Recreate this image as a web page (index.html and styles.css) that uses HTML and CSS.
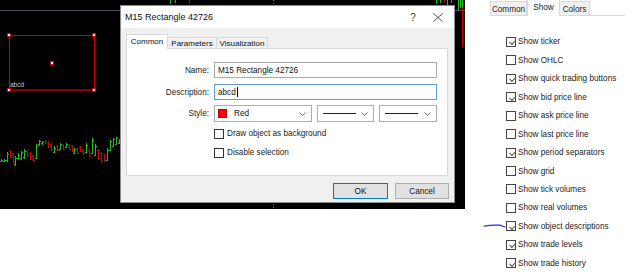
FILE: index.html
```html
<!DOCTYPE html>
<html>
<head>
<meta charset="utf-8">
<link rel="stylesheet" href="styles.css">
</head>
<body>
<div class="screen">
  <div class="chart">
    <svg class="chart-svg" width="465" height="209" viewBox="0 0 465 209">
      <line x1="0" y1="10.5" x2="465" y2="10.5" stroke="#4c525e" stroke-width="1"/>
      <line x1="273.5" y1="0" x2="273.5" y2="209" stroke="#5c6370" stroke-width="1" stroke-dasharray="1 2"/>
      <path fill="none" stroke="#1fbf1f" stroke-width="1" d="M1.5 159V162M0 161.5H1.5M1.5 160.5H3M4.5 159V162M3 161.5H4.5M4.5 160.5H6M7.5 152V162M6 160.5H7.5M7.5 154.5H9M15.5 156V166M14 164.5H15.5M15.5 158.5H17M18.5 153V160M17 158.5H18.5M18.5 155.5H20M21.5 151V160M20 158.5H21.5M21.5 152.5H23M24.5 149V159M23 157.5H24.5M24.5 151.5H26M36.5 144V159M35 158.5H36.5M36.5 146.5H38M39.5 140V146M38 144.5H39.5M39.5 141.5H41M42.5 141V145M41 143.5H42.5M42.5 142.5H44M54.5 146V153M53 152.5H54.5M54.5 148.5H56M60.5 143V150M59 149.5H60.5M60.5 144.5H62M66.5 143V148M65 147.5H66.5M66.5 144.5H68M74.5 148V154M73 153.5H74.5M74.5 149.5H76M86.5 143V153M85 152.5H86.5M86.5 145.5H88M92.5 138V154M91 153.5H92.5M92.5 140.5H94M95.5 144V156M94 155.5H95.5M95.5 146.5H97M107.5 148V161M106 160.5H107.5M107.5 150.5H109M110.5 140V151M109 150.5H110.5M110.5 141.5H112M113.5 138V147M112 146.5H113.5M113.5 139.5H115M116.5 137V145M115 144.5H116.5M116.5 138.5H118M119.5 139V144M118 143.5H119.5M170.5 0V4M175.5 0V3M436.5 0V4M440.5 0V3M447.5 0V5M451.5 0V3M458.5 0V10M460.5 0V8M462.5 0V8"/>
      <path fill="none" stroke="#d00000" stroke-width="1" d="M10.5 150V158M9 151.5H10.5M10.5 157.5H12M13.5 153V163M12 155.5H13.5M13.5 162.5H15M27.5 150V157M26 151.5H27.5M27.5 155.5H29M30.5 152V160M29 153.5H30.5M30.5 158.5H32M33.5 155V162M32 156.5H33.5M33.5 160.5H35M45.5 140V144M44 141.5H45.5M45.5 143.5H47M48.5 141V148M47 142.5H48.5M48.5 147.5H50M51.5 143V151M50 144.5H51.5M51.5 149.5H53M57.5 145V151M56 146.5H57.5M57.5 150.5H59M63.5 144V150M62 145.5H63.5M63.5 149.5H65M69.5 144V150M68 145.5H69.5M69.5 149.5H71M72.5 145V152M71 146.5H72.5M72.5 151.5H74M77.5 148V154M76 149.5H77.5M77.5 153.5H79M80.5 146V152M79 147.5H80.5M80.5 151.5H82M83.5 149V155M82 150.5H83.5M83.5 153.5H85M89.5 149V157M88 150.5H89.5M89.5 156.5H91M98.5 149V160M97 150.5H98.5M98.5 158.5H100M101.5 152V163M100 153.5H101.5M101.5 161.5H103M104.5 154V162M103 155.5H104.5M104.5 160.5H106M189.5 0V4M444.5 0V2M462.5 8V47"/>
      <rect x="9.5" y="35.5" width="85" height="54" fill="none" stroke="#d00000" stroke-width="1"/>
      <line x1="9" y1="90" x2="95" y2="90" stroke="#8a0000" stroke-width="2"/>
      <text x="10" y="87" class="obj-label">abcd</text>
      <g fill="#fff" stroke="#e00000" stroke-width="1">
        <rect x="7.5" y="33.5" width="3" height="3"/>
        <rect x="92.5" y="33.5" width="3" height="3"/>
        <rect x="7.5" y="88.5" width="3" height="3"/>
        <rect x="92.5" y="88.5" width="3" height="3"/>
        <rect x="50.5" y="61.5" width="3" height="3"/>
      </g>
    </svg>

    <div class="dialog">
      <div class="titlebar">
        <span class="title">M15 Rectangle 42726</span>
        <span class="help">?</span>
        <span class="close">
          <svg width="10" height="9" viewBox="0 0 10 9"><path d="M0.5 0.5L9.5 8.5M9.5 0.5L0.5 8.5" stroke="#444" stroke-width="0.9" fill="none"/></svg>
        </span>
      </div>
      <div class="dlg-body">
        <div class="tabs">
          <div class="tab active">Common</div>
          <div class="tab t-params">Parameters</div>
          <div class="tab t-vis">Visualization</div>
        </div>
        <div class="panel">
          <div class="row r-name">
            <span class="label">Name:</span>
            <div class="input">M15 Rectangle 42726</div>
          </div>
          <div class="row r-desc">
            <span class="label">Description:</span>
            <div class="input focus">abcd<span class="caret"></span></div>
          </div>
          <div class="row r-style">
            <span class="label">Style:</span>
            <div class="selects">
              <div class="select s-color">
                <span class="swatch"></span><span class="sel-text">Red</span>
                <svg class="chev" width="7" height="4" viewBox="0 0 7 4"><path d="M0.5 0.5L3.5 3.5L6.5 0.5" stroke="#777" fill="none"/></svg>
              </div>
              <div class="select s-line">
                <span class="line-sample"></span>
                <svg class="chev" width="7" height="4" viewBox="0 0 7 4"><path d="M0.5 0.5L3.5 3.5L6.5 0.5" stroke="#777" fill="none"/></svg>
              </div>
              <div class="select s-width">
                <span class="line-sample"></span>
                <svg class="chev" width="7" height="4" viewBox="0 0 7 4"><path d="M0.5 0.5L3.5 3.5L6.5 0.5" stroke="#777" fill="none"/></svg>
              </div>
            </div>
          </div>
          <div class="row r-check1">
            <span class="label"></span>
            <span class="cbox"></span><span class="ctext">Draw object as background</span>
          </div>
          <div class="row r-check2">
            <span class="label"></span>
            <span class="cbox"></span><span class="ctext">Disable selection</span>
          </div>
        </div>
        <div class="footer">
          <div class="btn default">OK</div>
          <div class="btn">Cancel</div>
        </div>
      </div>
    </div>
  </div>

  <div class="side">
    <div class="side-tabs">
      <div class="stab">Common</div>
      <div class="stab active">Show</div>
      <div class="stab s-colors">Colors</div>
      <div class="stab-fill"></div>
    </div>
    <ul class="opts">
      <li><span class="cbox on"></span>Show ticker</li>
      <li><span class="cbox"></span>Show OHLC</li>
      <li><span class="cbox on"></span>Show quick trading buttons</li>
      <li><span class="cbox on"></span>Show bid price line</li>
      <li><span class="cbox"></span>Show ask price line</li>
      <li><span class="cbox"></span>Show last price line</li>
      <li><span class="cbox on"></span>Show period separators</li>
      <li><span class="cbox"></span>Show grid</li>
      <li><span class="cbox"></span>Show tick volumes</li>
      <li><span class="cbox"></span>Show real volumes</li>
      <li><span class="cbox on"></span>Show object descriptions</li>
      <li><span class="cbox on"></span>Show trade levels</li>
      <li><span class="cbox on"></span>Show trade history</li>
    </ul>
    <svg class="scribble" width="26" height="8" viewBox="0 0 26 8"><path d="M1 4.2Q9 2.6 17 3.2L22 5" stroke="#2233dd" stroke-width="1.2" fill="none" stroke-linecap="round"/></svg>
  </div>
</div>
</body>
</html>
```

FILE: styles.css
```css
* { box-sizing: border-box; }

body {
  margin: 0;
  background: #fff;
  font-family: "Liberation Sans", Arial, sans-serif;
  color: #000;
}

.screen {
  display: flex;
  width: 625px;
  height: 275px;
  overflow: hidden;
}

/* ---------- chart ---------- */
.chart {
  position: relative;
  flex: none;
  width: 465px;
  height: 209px;
  background: #000;
}

.chart-svg { display: block; }

.obj-label {
  font-family: "Liberation Sans", Arial, sans-serif;
  font-size: 6.5px;
  fill: #c8c8c8;
}

/* ---------- dialog ---------- */
.dialog {
  position: absolute;
  left: 120px;
  top: 5px;
  width: 335px;
  height: 198px;
  background: #f0f0f0;
  border: 1px solid #8c8c8c;
  display: flex;
  flex-direction: column;
  font-size: 8.2px;
}

.titlebar {
  flex: none;
  height: 22px;
  background: #fff;
  display: flex;
  align-items: center;
  padding-left: 4px;
}

.title {
  flex: 1;
  font-size: 9px;
  color: #111;
}

.help {
  width: 20px;
  text-align: center;
  font-size: 10px;
  color: #444;
}

.close {
  width: 30px;
  margin-right: 1px;
  display: flex;
  justify-content: center;
}
.close svg { display: block; }

.dlg-body {
  flex: 1;
  display: flex;
  flex-direction: column;
  padding: 6px 0 0 5px;
}

.tabs {
  display: flex;
  align-items: flex-end;
  height: 14px;
  position: relative;
  z-index: 1;
}

.tab {
  height: 11px;
  border: 1px solid #d9d9d9;
  border-bottom: none;
  border-left: none;
  background: #f0f0f0;
  display: flex;
  align-items: center;
  justify-content: center;
  font-size: 8px;
  color: #111;
}

.tab.active {
  width: 42px;
  height: 15px;
  margin-bottom: -1px;
  background: #fff;
  border-left: 1px solid #d9d9d9;
  padding-bottom: 1px;
}
.t-params { width: 49px; }
.t-vis { width: 51px; }

.panel {
  width: 322px;
  height: 128px;
  background: #fff;
  border: 1px solid #d9d9d9;
  padding-top: 13px;
  display: flex;
  flex-direction: column;
}

.row {
  display: flex;
  align-items: center;
  flex: none;
}

.label {
  width: 82px;
  margin-right: 5px;
  text-align: right;
  color: #222;
  flex: none;
}

.r-name { height: 16px; }
.r-desc { height: 16px; margin-top: 6px; }
.r-style { height: 17px; margin-top: 5px; }
.r-check1 { height: 13px; margin-top: 5px; }
.r-check2 { height: 13px; margin-top: 6px; }

.input {
  width: 223px;
  height: 100%;
  border: 1px solid #a9a9a9;
  padding-left: 3px;
  display: flex;
  align-items: center;
  color: #111;
}

.input.focus { border-color: #5a9fe0; }

.caret {
  display: inline-block;
  width: 1px;
  height: 10px;
  background: #000;
  margin-left: 1px;
}

.selects {
  display: flex;
  gap: 5px;
  height: 100%;
}

.select {
  height: 100%;
  border: 1px solid #adadad;
  background: #fff;
  display: flex;
  align-items: center;
  position: relative;
}

.select .chev {
  position: absolute;
  right: 5px;
  top: 6px;
}

.s-color { width: 98px; padding-left: 3px; }
.s-line { width: 57px; padding-left: 5px; }
.s-width { width: 58px; padding-left: 5px; }

.swatch {
  width: 9px;
  height: 9px;
  background: #ff0000;
  border: 1px solid #c00000;
  margin-right: 7px;
}

.sel-text { color: #111; }

.line-sample {
  display: block;
  width: 33px;
  height: 1px;
  background: #222;
}

.cbox {
  flex: none;
  width: 10px;
  height: 10px;
  border: 1px solid #333;
  background: #fff;
  margin-right: 3px;
  position: relative;
}

.ctext { color: #222; }

.footer {
  display: flex;
  justify-content: flex-end;
  gap: 7px;
  padding-right: 5px;
  margin-top: 7px;
}

.btn {
  height: 16px;
  width: 54px;
  background: #e1e1e1;
  border: 1px solid #adadad;
  display: flex;
  align-items: center;
  justify-content: center;
  color: #111;
}

.btn.default {
  width: 55px;
  border-color: #0078d7;
}

/* ---------- side panel ---------- */
.side {
  position: relative;
  flex: none;
  width: 160px;
  height: 275px;
  background: #fff;
  font-size: 8.2px;
}

.side-tabs {
  display: flex;
  align-items: flex-end;
  height: 16px;
  padding-left: 25px;
}

.stab {
  width: 37px;
  height: 15px;
  background: #f0f0f0;
  border: 1px solid #d9d9d9;
  display: flex;
  align-items: center;
  justify-content: center;
  color: #222;
  padding-top: 2px;
}

.stab.active {
  width: 33px;
  height: 16px;
  background: #fff;
  border-bottom: none;
  border-top: none;
  padding-top: 0;
  padding-bottom: 2px;
}

.s-colors { width: 30px; border-left: none; }

.stab-fill {
  flex: 1;
  height: 1px;
  background: #d9d9d9;
}

.opts {
  list-style: none;
  margin: 0;
  padding: 16.5px 0 0 41px;
}

.opts li {
  height: 18.47px;
  display: flex;
  align-items: center;
  color: #222;
}

.opts .cbox { border-color: #444; margin-right: 2px; }

.cbox.on::after {
  content: "";
  position: absolute;
  left: 1.5px;
  top: 0.5px;
  width: 5px;
  height: 2.5px;
  border-left: 1px solid #555;
  border-bottom: 1px solid #555;
  transform: translate(0.5px, 1.5px) rotate(-45deg);
}

.scribble {
  position: absolute;
  left: 18px;
  top: 222px;
}
```
